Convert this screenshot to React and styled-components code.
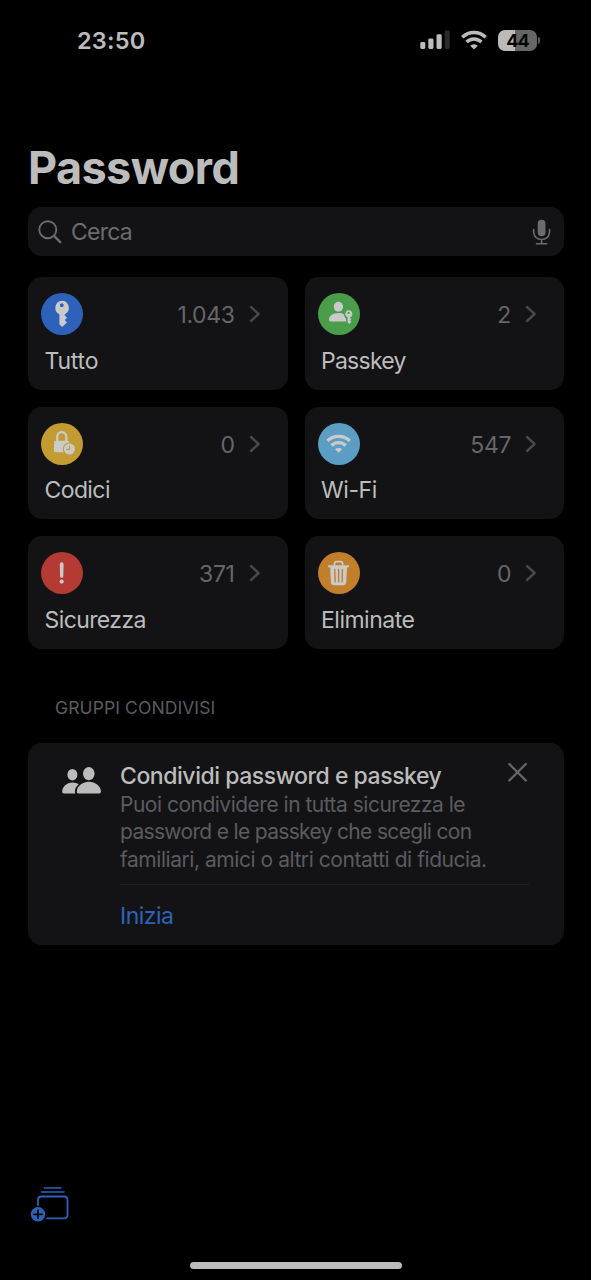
import React from "react";
import styled, { createGlobalStyle } from "styled-components";

const GlobalStyle = createGlobalStyle`
    * {
        box-sizing: border-box;
    }

    body {
        margin: 0;
        background: #000;
        font-family: Inter, "Liberation Sans", sans-serif;
    }
`;

const Screen = styled.div`
    width: 591px;
    height: 1280px;
    display: flex;
    flex-direction: column;
    background: #000;
    overflow: hidden;
`;

const StatusBar = styled.header`
    height: 80px;
    padding: 0 51px 0 77px;
    display: flex;
    align-items: center;
    justify-content: space-between;
`;

const Time = styled.div`
    padding-top: 2px;
    color: #bcbcbc;
    font-size: 23.5px;
    font-weight: 600;
    line-height: 30px;
    letter-spacing: 0.2px;
`;

const StatusIcons = styled.div`
    display: flex;
    align-items: center;
    gap: 11px;
`;

const Battery = styled.div`
    display: flex;
    align-items: center;
    gap: 1px;
`;

const BatteryBody = styled.div`
    width: 39px;
    height: 21px;
    border-radius: 7px;
    background: linear-gradient(to right, #bababa 44%, #666 44%);
    color: #050505;
    font-size: 18px;
    font-weight: 700;
    line-height: 21px;
    letter-spacing: -0.8px;
    text-align: center;
`;

const BatteryTip = styled.div`
    width: 2px;
    height: 7px;
    border-radius: 0 2px 2px 0;
    background: #5c5c5c;
`;

const Main = styled.main`
    flex: 1;
    padding: 60px 27px 0 28px;
    display: flex;
    flex-direction: column;
`;

const Title = styled.h1`
    margin: 0;
    height: 55px;
    color: #bcbcbc;
    font-size: 45px;
    font-weight: 700;
    line-height: 55px;
    letter-spacing: -0.6px;
`;

const SearchField = styled.div`
    margin-top: 12px;
    height: 49px;
    flex-shrink: 0;
    padding: 0 13px 0 10px;
    display: flex;
    align-items: center;
    border-radius: 14px;
    background: #131315;
`;

const SearchText = styled.span`
    flex: 1;
    padding-top: 1px;
    margin-left: 9px;
    color: #6b6b70;
    font-size: 23px;
    line-height: 30px;
    letter-spacing: -0.75px;
`;

const Grid = styled.section`
    margin-top: 21px;
    display: grid;
    grid-template-columns: 1fr 1fr;
    grid-auto-rows: 112.5px;
    gap: 17px;
`;

const Card = styled.div`
    padding: 16px 27px 0 13px;
    border-radius: 14px;
    background: #131315;
`;

const CardTop = styled.div`
    height: 42px;
    display: flex;
    align-items: center;
`;

const Badge = styled.div`
    width: 42px;
    height: 42px;
    border-radius: 50%;
    background: ${({ $color }) => $color};
`;

const Count = styled.span`
    flex: 1;
    padding-top: 2px;
    margin-right: 14px;
    color: #65656a;
    font-size: 23px;
    line-height: 30px;
    text-align: right;
    letter-spacing: -0.4px;
`;

const Label = styled.div`
    margin: 10.5px 0 0 3.5px;
    color: #bcbcbc;
    font-size: 23px;
    line-height: 30px;
    letter-spacing: ${({ $spacing }) => $spacing}px;
`;

const GroupHeading = styled.h2`
    margin: 48px 0 0 27px;
    color: #5b5b60;
    font-size: 17.5px;
    font-weight: 400;
    line-height: 22px;
    letter-spacing: 0.1px;
`;

const ShareCard = styled.section`
    margin-top: 24px;
    height: 202px;
    padding: 16px 35px 0 34px;
    display: flex;
    border-radius: 14px;
    background: #131315;
`;

const ShareBody = styled.div`
    flex: 1;
    margin-left: 18px;
`;

const ShareTop = styled.div`
    height: 32px;
    display: flex;
    justify-content: space-between;
`;

const ShareTitle = styled.h3`
    margin: 0;
    color: #bcbcbc;
    font-size: 23px;
    font-weight: 500;
    line-height: 34px;
    letter-spacing: -0.45px;
    white-space: nowrap;
`;

const ShareText = styled.p`
    margin: 0;
    color: #5b5b60;
    font-size: 21px;
    line-height: 27.5px;
    white-space: nowrap;
`;

const ShareLine = styled.span`
    display: block;
    letter-spacing: ${({ $spacing }) => $spacing}px;
`;

const ShareAction = styled.div`
    margin-top: 10.5px;
    padding-top: 16px;
    border-top: 1px solid #222225;
    color: #2e62b8;
    font-size: 23px;
    line-height: 30px;
    letter-spacing: -0.5px;
`;

const Toolbar = styled.footer`
    height: 76px;
    padding-left: 30px;
`;

const HomeIndicator = styled.div`
    width: 212px;
    height: 7px;
    margin: 0 auto 11px 190px;
    border-radius: 4px;
    background: #bcbcbc;
`;

const Ink = "#cacaca";

const SignalIcon = () => (
    <svg width="30" height="20" viewBox="0 0 30 20">
        <g fill="#bcbcbc">
            <rect x="0.3" y="12" width="5" height="7" rx="1.4" />
            <rect x="8.3" y="8.5" width="5.2" height="10.5" rx="1.4" />
            <rect x="16.5" y="4.3" width="5.2" height="14.7" rx="1.4" />
        </g>
        <rect x="24.7" y="0.5" width="5" height="18.5" rx="1.4" fill="#2b2b2b" />
    </svg>
);

const WifiShape = ({ color }) => (
    <g fill="none" stroke={color} strokeWidth="3.5">
        <path d="M1.3 7.2 A16.7 16.7 0 0 1 24.7 7.2" />
        <path d="M5.6 12 A10.5 10.5 0 0 1 20.4 12" />
        <path d="M13 19.6 L9.2 15.8 A5.4 5.4 0 0 1 16.8 15.8 Z" fill={color} stroke="none" />
    </g>
);

const KeyIcon = () => (
    <svg width="42" height="42" viewBox="0 0 42 42">
        <path
            fill={Ink}
            fillRule="evenodd"
            d="M20.8 7.8 a7.1 7.1 0 0 1 3 13.5 v1.2 l2.2 2.2 -2.2 2.3 2.2 2.4 -2.2 2.2 -2.8 2.3 -2.6 -2.6 v-10 a7.1 7.1 0 0 1 2.4 -13.5 z M20.8 10.3 a1.9 1.9 0 1 0 0.01 0 z"
        />
    </svg>
);

const PasskeyIcon = () => (
    <svg width="42" height="42" viewBox="0 0 42 42">
        <g fill={Ink}>
            <ellipse cx="20.4" cy="13.8" rx="4.6" ry="5" />
            <path d="M13 28.5 c-1.4 0 -2 -0.8 -2 -2 c0 -3.6 4 -6.5 9.3 -6.5 c2.3 0 4.3 0.5 5.8 1.4 c0.1 1.9 0.8 3.2 2 4.1 v3 z" />
            <path
                fillRule="evenodd"
                d="M30.6 17.2 a3.7 3.7 0 0 1 1.5 7.1 v0.8 l1.2 1.2 -1.2 1.2 1.2 1.3 -1.8 2.3 -1.9 -1.6 v-5.2 a3.7 3.7 0 0 1 1 -7.1 z M30.6 18.8 a1.1 1.1 0 1 0 0.01 0 z"
            />
        </g>
    </svg>
);

const CodesIcon = ({ background }) => (
    <svg width="42" height="42" viewBox="0 0 42 42">
        <path d="M16.2 19 V14 C16.2 7.6 25.3 7.6 25.3 14 V19" fill="none" stroke={Ink} strokeWidth="2.2" />
        <rect x="13" y="17.8" width="15.3" height="11.5" rx="1.8" fill={Ink} />
        <circle cx="28.4" cy="26" r="6.6" fill={background} />
        <circle cx="28.4" cy="26" r="5.5" fill={Ink} />
        <path d="M28.5 22.9 V26.3 H25.8" fill="none" stroke={background} strokeWidth="1.2" strokeLinecap="round" />
    </svg>
);

const WifiIcon = () => (
    <svg width="42" height="42" viewBox="0 0 42 42">
        <g transform="translate(8.1 11) scale(0.96)">
            <WifiShape color={Ink} />
        </g>
    </svg>
);

const SecurityIcon = () => (
    <svg width="42" height="42" viewBox="0 0 42 42">
        <path d="M18.8 12.2 a1.9 1.9 0 0 1 3.8 0 l-0.3 12 a1.6 1.6 0 0 1 -3.2 0 z" fill={Ink} />
        <circle cx="20.7" cy="29.6" r="2.1" fill={Ink} />
    </svg>
);

const TrashIcon = ({ background }) => (
    <svg width="42" height="42" viewBox="0 0 42 42">
        <path d="M16.5 14 V11.6 Q16.5 9.7 18.4 9.7 H22.7 Q24.6 9.7 24.6 11.6 V14" fill="none" stroke={Ink} strokeWidth="1.7" />
        <path d="M10.9 14.3 H30.3" stroke={Ink} strokeWidth="2" strokeLinecap="round" />
        <path d="M12.1 14.5 H29.1 L28.2 30.8 Q28 33.2 25.7 33.2 H15.5 Q13.2 33.2 13 30.8 Z" fill={Ink} />
        <path d="M16.8 17.5 L17.1 29.8 M20.6 17.5 V29.8 M24.4 17.5 L24.1 29.8" stroke={background} strokeWidth="1.4" strokeLinecap="round" />
    </svg>
);

const Chevron = () => (
    <svg width="12" height="18" viewBox="0 0 12 18">
        <path d="M2 2 L9.6 9 L2 16" fill="none" stroke="#48484c" strokeWidth="2.4" strokeLinecap="round" strokeLinejoin="round" />
    </svg>
);

const categories = [
    { label: "Tutto", spacing: -0.2, count: "1.043", color: "#2e62ba", Icon: KeyIcon },
    { label: "Passkey", spacing: -0.75, count: "2", color: "#4a9d4b", Icon: PasskeyIcon },
    { label: "Codici", spacing: -0.6, count: "0", color: "#c29c33", Icon: CodesIcon },
    { label: "Wi-Fi", spacing: -0.4, count: "547", color: "#5c9dc4", Icon: WifiIcon },
    { label: "Sicurezza", spacing: -0.6, count: "371", color: "#b33b33", Icon: SecurityIcon },
    { label: "Eliminate", spacing: -0.5, count: "0", color: "#c17f2c", Icon: TrashIcon },
];

function App() {
    return (
        <Screen>
            <GlobalStyle />
            <StatusBar>
                <Time>23:50</Time>
                <StatusIcons>
                    <SignalIcon />
                    <svg width="26" height="20" viewBox="0 0 26 20">
                        <WifiShape color="#bcbcbc" />
                    </svg>
                    <Battery>
                        <BatteryBody>44</BatteryBody>
                        <BatteryTip />
                    </Battery>
                </StatusIcons>
            </StatusBar>

            <Main>
                <Title>Password</Title>
                <SearchField>
                    <svg width="24" height="24" viewBox="0 0 24 24" fill="none" stroke="#6b6b70" strokeLinecap="round">
                        <circle cx="9.8" cy="9.7" r="8.5" strokeWidth="1.9" />
                        <path d="M16.2 16.2 L22.2 22.2" strokeWidth="2.4" />
                    </svg>
                    <SearchText>Cerca</SearchText>
                    <svg width="19" height="26" viewBox="0 0 19 26" fill="none" stroke="#6b6b70" strokeWidth="1.6" strokeLinecap="round">
                        <rect x="5.7" y="0.8" width="7.8" height="16.4" rx="3.9" fill="#6b6b70" stroke="none" />
                        <path d="M1.7 10.5 V13 C1.7 23 17.5 23 17.5 13 V10.5 M9.6 20.5 V24.6 M4.5 24.7 H14.7" />
                    </svg>
                </SearchField>

                <Grid>
                    {categories.map(({ label, spacing, count, color, Icon }) => (
                        <Card key={label}>
                            <CardTop>
                                <Badge $color={color}>
                                    <Icon background={color} />
                                </Badge>
                                <Count>{count}</Count>
                                <Chevron />
                            </CardTop>
                            <Label $spacing={spacing}>{label}</Label>
                        </Card>
                    ))}
                </Grid>

                <GroupHeading>GRUPPI CONDIVISI</GroupHeading>
                <ShareCard>
                    <svg width="40" height="36" viewBox="0 0 40 36" fill="#bcbcbc">
                        <ellipse cx="10.4" cy="15.7" rx="5" ry="5.8" />
                        <path d="M2 34.6 c-1.4 0 -1.8 -0.9 -1.8 -2 c0 -4.7 4.4 -9.1 10.2 -9.1 c2.4 0 4.6 0.7 6.3 1.8 c-2.5 2.2 -3.8 4.8 -3.8 7.5 c0 0.7 0.1 1.3 0.5 1.8 z" />
                        <ellipse cx="26.8" cy="14.6" rx="5.8" ry="6.6" />
                        <path d="M17 34.6 c-1.6 0 -2.2 -0.9 -2.2 -2.2 c0 -4.5 4.6 -9.7 12.1 -9.7 s12 5.2 12 9.7 c0 1.3 -0.6 2.2 -2.2 2.2 z" />
                    </svg>
                    <ShareBody>
                        <ShareTop>
                            <ShareTitle>Condividi password e passkey</ShareTitle>
                            <svg width="22" height="26" viewBox="0 0 22 26">
                                <path d="M2.3 5 L18.8 21.5 M18.8 5 L2.3 21.5" stroke="#65656a" strokeWidth="2.4" strokeLinecap="round" />
                            </svg>
                        </ShareTop>
                        <ShareText>
                            <ShareLine $spacing={-0.5}>Puoi condividere in tutta sicurezza le</ShareLine>
                            <ShareLine $spacing={-0.67}>password e le passkey che scegli con</ShareLine>
                            <ShareLine $spacing={-0.45}>familiari, amici o altri contatti di fiducia.</ShareLine>
                        </ShareText>
                        <ShareAction>Inizia</ShareAction>
                    </ShareBody>
                </ShareCard>
            </Main>

            <Toolbar>
                <svg width="40" height="38" viewBox="0 0 40 38" fill="none" stroke="#2e62b8" strokeLinecap="round">
                    <path d="M14.5 2 H31 M11.5 6 H34" strokeWidth="1.5" />
                    <path d="M8 19 V14 Q8 10.5 11.5 10.5 H34 Q37.5 10.5 37.5 14 V28.8 Q37.5 32.3 34 32.3 H17" strokeWidth="1.8" />
                    <circle cx="8" cy="28.3" r="7.2" fill="#2e62b8" stroke="none" />
                    <path d="M8 24.3 V32.3 M4 28.3 H12" stroke="#000" strokeWidth="1.7" />
                </svg>
            </Toolbar>
            <HomeIndicator />
        </Screen>
    );
}

export default App;
